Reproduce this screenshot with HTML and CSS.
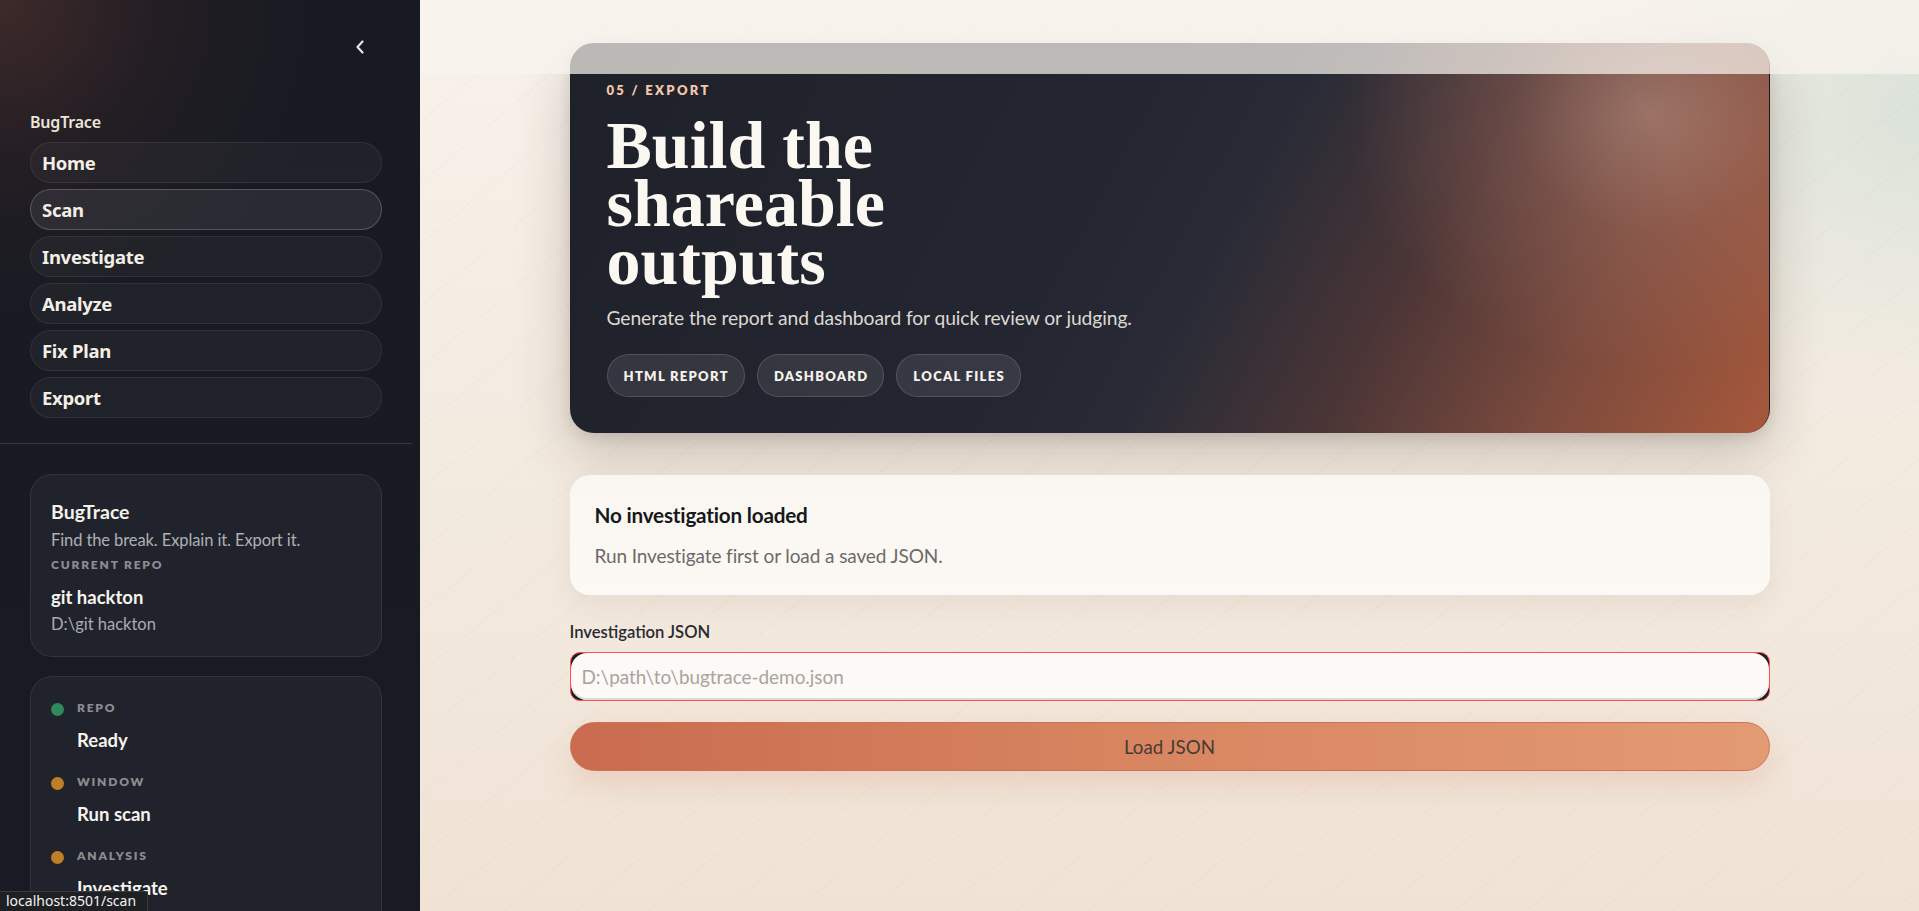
FILE: index.html
```html
<!DOCTYPE html>
<html lang="en">
<head>
<meta charset="utf-8">
<title>BugTrace · Export</title>
<link rel="stylesheet" href="styles.css">
</head>
<body>
<div class="app">
  <aside class="sidebar">
    <div class="sb-top">
      <button class="collapse" aria-label="Collapse sidebar">
        <svg width="10" height="14" viewBox="0 0 10 14"><polyline points="7.5,1.5 2.5,7 7.5,12.5" fill="none" stroke="#e6e4e0" stroke-width="2.2" stroke-linecap="round" stroke-linejoin="round"/></svg>
      </button>
    </div>
    <div class="sb-brand">BugTrace</div>
    <nav class="nav">
      <a class="nav-item">Home</a>
      <a class="nav-item active">Scan</a>
      <a class="nav-item">Investigate</a>
      <a class="nav-item">Analyze</a>
      <a class="nav-item">Fix Plan</a>
      <a class="nav-item">Export</a>
    </nav>
    <div class="sb-divider"></div>
    <div class="sb-card info">
      <div class="info-title">BugTrace</div>
      <div class="info-tag">Find the break. Explain it. Export it.</div>
      <div class="eyebrow">CURRENT REPO</div>
      <div class="info-repo">git hackton</div>
      <div class="info-path">D:\git hackton</div>
    </div>
    <div class="sb-card status">
      <div class="st-row">
        <div class="st-head"><span class="dot green"></span><span class="eyebrow">REPO</span></div>
        <div class="st-value">Ready</div>
      </div>
      <div class="st-row">
        <div class="st-head"><span class="dot amber"></span><span class="eyebrow">WINDOW</span></div>
        <div class="st-value">Run scan</div>
      </div>
      <div class="st-row">
        <div class="st-head"><span class="dot amber"></span><span class="eyebrow">ANALYSIS</span></div>
        <div class="st-value">Investigate</div>
      </div>
    </div>
  </aside>

  <main class="main">
    <div class="content">
      <section class="hero">
        <div class="hero-kicker">05 / EXPORT</div>
        <h1 class="hero-title">Build the<br>shareable<br>outputs</h1>
        <p class="hero-sub">Generate the report and dashboard for quick review or judging.</p>
        <div class="chips">
          <span class="chip">HTML REPORT</span>
          <span class="chip">DASHBOARD</span>
          <span class="chip">LOCAL FILES</span>
        </div>
      </section>

      <section class="empty">
        <div class="empty-title">No investigation loaded</div>
        <div class="empty-text">Run Investigate first or load a saved JSON.</div>
      </section>

      <label class="field-label" for="json">Investigation JSON</label>
      <div class="input-wrap">
        <input id="json" class="input" type="text" placeholder="D:\path\to\bugtrace-demo.json">
      </div>
      <button class="load">Load JSON</button>
    </div>
  </main>
</div>
<header class="topbar"></header>
<div class="statusbar">localhost:8501/scan</div>
</body>
</html>
```

FILE: styles.css
```css
* { box-sizing: border-box; }
html, body { margin: 0; padding: 0; height: 100%; }
body {
  font-family: Lato, "Noto Sans", sans-serif;
  overflow: hidden;
  background: #f4ece2;
}
.app { display: flex; height: 911px; }

/* ---------- sidebar ---------- */
.sidebar {
  width: 420px;
  flex: none;
  height: 100%;
  overflow: hidden;
  padding: 34px 0 0 30px;
  background-color: #161920;
  background-image:
    radial-gradient(circle at 0 0, rgba(110, 60, 50, 0.45) 0, rgba(80, 45, 42, 0.18) 170px, transparent 330px),
    linear-gradient(180deg, #171a22 0%, #181b23 100%);
  color: #f2eee8;
}
.sb-top { height: 26px; display: flex; justify-content: flex-end; padding-right: 48px; }
.collapse {
  width: 24px; height: 26px; border: 0; background: transparent; padding: 0;
  display: flex; align-items: center; justify-content: center; cursor: pointer;
}
.sb-brand {
  margin-top: 52px;
  height: 20px; line-height: 20px;
  font-family: "Noto Sans", sans-serif;
  font-weight: 600; font-size: 16px; color: #ebe5dc;
  letter-spacing: -0.2px;
}
.nav { margin-top: 10px; width: 352px; display: flex; flex-direction: column; gap: 6px; }
.nav-item {
  height: 41px;
  display: flex; align-items: center;
  padding: 0 11px;
  border-radius: 21px;
  border: 1px solid rgba(255, 255, 255, 0.075);
  background: rgba(255, 255, 255, 0.035);
  font-family: "Noto Sans", sans-serif;
  font-weight: 700; font-size: 18.5px; color: #f3eee6;
  letter-spacing: -0.3px;
}
.nav-item.active {
  background: rgba(255, 255, 255, 0.075);
  border-color: rgba(255, 255, 255, 0.2);
}
.sb-divider {
  margin: 25px 8px 0 -30px;
  height: 1px;
  background: rgba(255, 255, 255, 0.13);
}
.sb-card {
  width: 352px;
  border-radius: 22px;
  border: 1px solid rgba(255, 255, 255, 0.08);
  background: #20232c;
  padding-left: 20px;
}
.info { margin-top: 30px; padding-top: 25px; padding-bottom: 20px; }
.info-title { font-weight: 700; font-size: 19.5px; line-height: 24px; color: #f6f2ec; margin-bottom: 4px; }
.info-tag { font-size: 16.5px; line-height: 24px; color: #aeb0b4; letter-spacing: -0.1px; }
.eyebrow {
  font-weight: 800; font-size: 12px; line-height: 16px;
  letter-spacing: 1.8px; color: #8b8d92;
}
.info .eyebrow { margin-top: 5px; }
.info-repo { margin-top: 12px; font-weight: 700; font-size: 18.5px; line-height: 24px; color: #f7f3ee; }
.info-path { margin-top: 3px; font-size: 16.5px; line-height: 24px; color: #a9abb0; }

.status { margin-top: 19px; padding-top: 23px; padding-bottom: 30px; }
.st-row + .st-row { margin-top: 22px; }
.st-head { display: flex; align-items: center; gap: 13px; height: 16px; }
.dot { width: 13px; height: 13px; border-radius: 50%; flex: none; margin-top: 3px; }
.dot.green { background: #2e8a5c; }
.dot.amber { background: #c07f26; }
.st-value { margin-top: 12px; padding-left: 26px; font-weight: 700; font-size: 18.5px; line-height: 24px; color: #f7f3ee; }

/* ---------- main ---------- */
.main {
  flex: 1;
  height: 100%;
  overflow: hidden;
  padding-top: 43px;
  background-color: #f3eadf;
  background-image:
    repeating-linear-gradient(140deg, transparent 0 46px, rgba(120, 95, 70, 0.035) 46px 47px),
    radial-gradient(ellipse 520px 420px at 100% 12%, rgba(214, 224, 214, 0.85), transparent 70%),
    linear-gradient(180deg, #f7f2eb 0%, #f3eadf 55%, #f0e3d6 100%);
}
.content { width: 1200px; margin: 0 auto; }

.hero {
  height: 390px;
  border-radius: 24px;
  padding: 39px 37px 0;
  color: #fbf6f0;
  background-color: #1f2129;
  background-image:
    radial-gradient(ellipse 300px 260px at 90% 18%, rgba(200, 160, 145, 0.5) 0, rgba(180, 130, 115, 0.25) 45%, transparent 100%),
    linear-gradient(118deg, #1f2129 0%, #232631 42%, #282b36 54%, #4a3536 68%, #7a4a3d 83%, #a7583b 100%);
  box-shadow: 0 22px 55px rgba(60, 40, 30, 0.22), 0 4px 14px rgba(40, 30, 25, 0.12);
  border-right: 1px solid rgba(25, 20, 20, 0.6);
}
.hero-kicker {
  font-weight: 800; font-size: 13px; line-height: 16px;
  letter-spacing: 2.3px; color: #f4c6ab;
}
.hero-title {
  margin: 18px 0 0;
  font-family: "Liberation Serif", "Times New Roman", serif;
  font-weight: 700; font-size: 68px; line-height: 58px;
  letter-spacing: 0; color: #fbf7f1;
}
.hero-sub {
  margin: 15px 0 0;
  font-size: 19.3px; line-height: 26px; color: #ddd8d2;
  letter-spacing: -0.1px;
}
.chips { margin-top: 23px; display: flex; gap: 12px; }
.chip {
  height: 43px;
  display: inline-flex; align-items: center;
  padding: 0 15px 0 16px;
  border-radius: 22px;
  border: 1px solid rgba(255, 255, 255, 0.14);
  background: rgba(255, 255, 255, 0.09);
  font-weight: 800; font-size: 13px; letter-spacing: 1.3px; color: #f7f2ec;
}

.empty {
  margin-top: 42px;
  height: 120px;
  border-radius: 20px;
  padding: 28px 25px 0;
  background: linear-gradient(180deg, #faf7f2 0%, #fcf9f5 100%);
  box-shadow: 0 10px 28px rgba(90, 60, 40, 0.07);
}
.empty-title { font-weight: 700; font-size: 20.7px; line-height: 24px; color: #17181c; letter-spacing: -0.2px; }
.empty-text { margin-top: 17px; font-size: 19px; line-height: 24px; color: #6d6a68; letter-spacing: -0.1px; }

.field-label {
  display: block;
  margin-top: 27px;
  font-size: 16.6px; line-height: 20px; font-weight: 600; color: #2a2b31;
}
.input-wrap {
  margin-top: 10px;
  height: 49px;
  border-radius: 10px;
  border: 1px solid #ff4f55;
  background: #1d1e24;
  overflow: hidden;
}
.input {
  display: block;
  width: 100%; height: 100%;
  border: 0; outline: none;
  border-radius: 16px;
  background: #fdf9f6;
  box-shadow: inset 0 -2px 0 #dedad6;
  padding: 0 11px;
  font-family: Lato, "Noto Sans", sans-serif;
  font-size: 18.9px; color: #333;
}
.input::placeholder { color: #a9a39d; }
.load {
  display: block;
  margin-top: 21px;
  width: 100%; height: 49px;
  border-radius: 25px;
  border: 1px solid #cd7354;
  background: linear-gradient(90deg, #c96b4f 0%, #d7845f 45%, #e39b73 100%);
  box-shadow: 0 14px 32px rgba(205, 120, 90, 0.2);
  font-family: Lato, "Noto Sans", sans-serif;
  font-size: 18.8px; color: #4a3a34;
  cursor: pointer;
}

/* ---------- overlays ---------- */
.topbar {
  position: fixed; top: 0; left: 420px; right: 0; height: 74px;
  background: rgba(248, 244, 237, 0.72);
}
.statusbar {
  position: fixed; left: 0; bottom: 0;
  width: 148px; height: 20px;
  padding-left: 6px;
  background: #1f2024;
  border-top: 1px solid #3a3b40; border-right: 1px solid #3a3b40;
  border-top-right-radius: 2px;
  font-family: "Noto Sans", sans-serif; font-size: 14px; line-height: 18px; color: #f2f2f2;
  white-space: nowrap; overflow: hidden;
}
```
